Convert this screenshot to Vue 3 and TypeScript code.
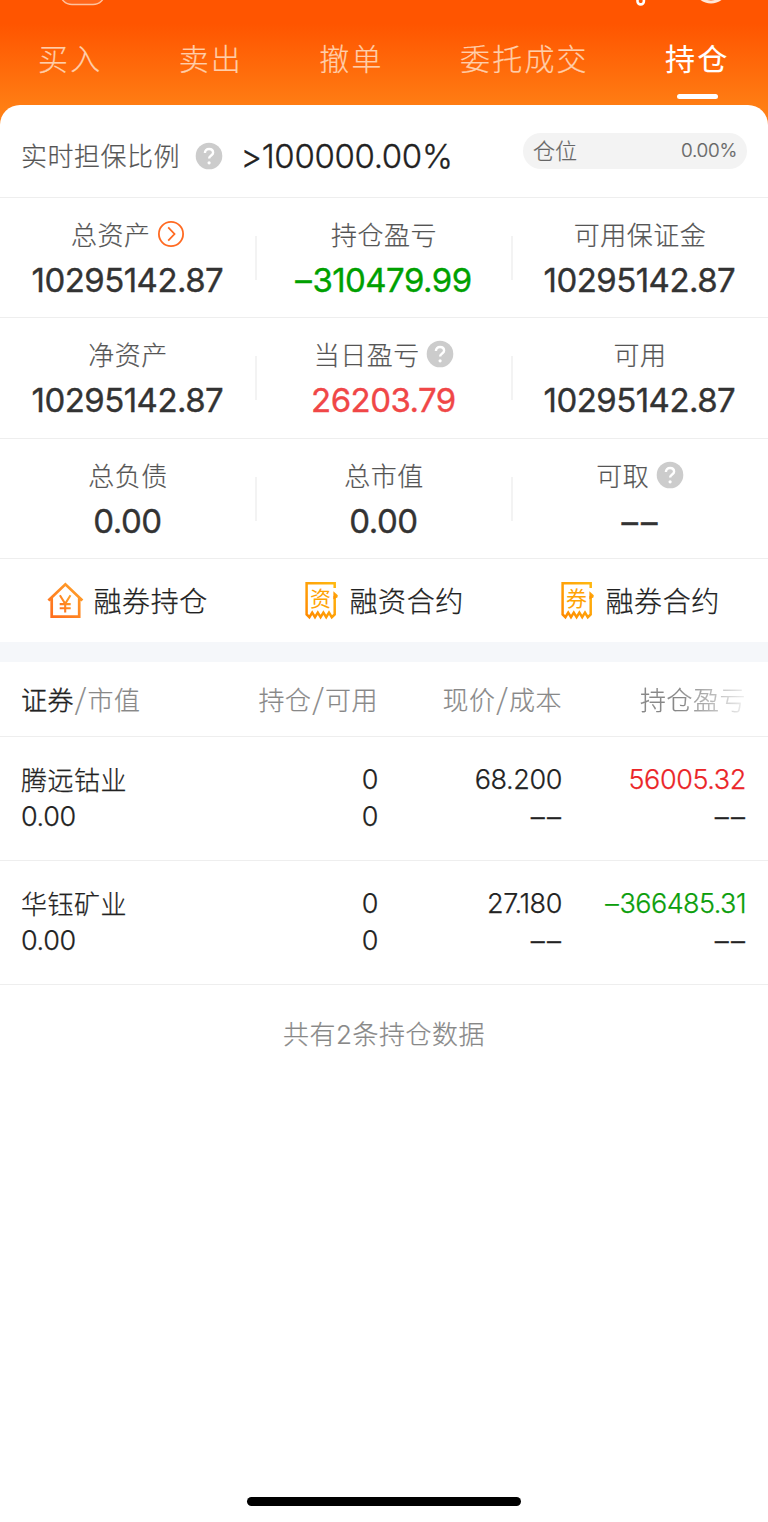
<script setup lang="ts">
interface Metric { label: string; value: string; sign?: string; tone?: string; mark?: 'help' | 'go' }
interface Holding { name: string; value: string; held: string; usable: string; price: string; cost: string; sign: string; profit: string; rate: string; tone: string }

const tabs: string[] = ['买入', '卖出', '撤单', '委托成交', '持仓']
const activeTab = '持仓'

const metricRows: Metric[][] = [
  [
    { label: '总资产', value: '10295142.87', mark: 'go' },
    { label: '持仓盈亏', sign: '–', value: '310479.99', tone: 'down' },
    { label: '可用保证金', value: '10295142.87' },
  ],
  [
    { label: '净资产', value: '10295142.87' },
    { label: '当日盈亏', value: '26203.79', tone: 'up', mark: 'help' },
    { label: '可用', value: '10295142.87' },
  ],
  [
    { label: '总负债', value: '0.00' },
    { label: '总市值', value: '0.00' },
    { label: '可取', value: '––', tone: 'dash', mark: 'help' },
  ],
]

const actions = [
  { label: '融券持仓', glyph: '' },
  { label: '融资合约', glyph: '资' },
  { label: '融券合约', glyph: '券' },
]

const columns: string[][] = [['证券', '市值'], ['持仓', '可用'], ['现价', '成本'], ['持仓盈亏']]

const holdings: Holding[] = [
  { name: '腾远钴业', value: '0.00', held: '0', usable: '0', price: '68.200', cost: '––', sign: '', profit: '56005.32', rate: '––', tone: 'up' },
  { name: '华钰矿业', value: '0.00', held: '0', usable: '0', price: '27.180', cost: '––', sign: '–', profit: '366485.31', rate: '––', tone: 'down' },
]
</script>

<template>
  <div class="screen">
    <header class="top">
      <svg class="edge" width="768" height="8" viewBox="0 0 768 8" fill="none">
        <rect x="60" y="-22" width="45" height="26.5" rx="12" stroke="#ffc29e" stroke-width="1.4" fill="#fff" fill-opacity=".1" />
        <path d="M637.5 -3V1.2a3.2 3.2 0 0 0 6.4 0V-3" stroke="#fff" stroke-width="2.6" />
        <circle cx="711" cy="-14" r="16" stroke="#ffe6d8" stroke-width="3" />
      </svg>
      <nav class="tabs">
        <span v-for="t in tabs" :key="t" class="tab" :class="{ active: t === activeTab }">{{ t }}</span>
      </nav>
    </header>

    <main class="sheet">
      <section class="ratio">
        <span class="ratio-label">实时担保比例</span>
        <svg class="help" width="28" height="28" viewBox="0 0 28 28"><circle cx="14" cy="14" r="13.3" fill="#ccc" /><path d="M9.9 11.1C9.9 8.4 11.6 7 14 7s4.1 1.4 4.1 3.7c0 2.8-4 2.9-4 5.9" fill="none" stroke="#fff" stroke-width="2.4" /><circle cx="14.1" cy="20.8" r="1.6" fill="#fff" /></svg>
        <span class="ratio-value">&gt;100000.00%</span>
        <span class="pill"><span class="pill-name">仓位</span><span class="pill-num">0.00%</span></span>
      </section>

      <section v-for="(row, i) in metricRows" :key="i" class="metrics">
        <div v-for="m in row" :key="m.label" class="metric">
          <div class="metric-label">
            <span>{{ m.label }}</span>
            <svg v-if="m.mark === 'help'" class="mark" width="28" height="28" viewBox="0 0 28 28"><circle cx="14" cy="14" r="13.3" fill="#ccc" /><path d="M9.9 11.1C9.9 8.4 11.6 7 14 7s4.1 1.4 4.1 3.7c0 2.8-4 2.9-4 5.9" fill="none" stroke="#fff" stroke-width="2.4" /><circle cx="14.1" cy="20.8" r="1.6" fill="#fff" /></svg>
            <svg v-if="m.mark === 'go'" class="mark" width="28" height="28" viewBox="0 0 28 28" fill="none" stroke="#ff6a22"><circle cx="14" cy="14" r="12.1" stroke-width="1.8" /><path d="M11.2 7.4l6.3 6.6-6.3 6.6" stroke-width="1.8" /></svg>
          </div>
          <div class="metric-value" :class="m.tone"><span v-if="m.sign" class="sign">{{ m.sign }}</span>{{ m.value }}</div>
        </div>
      </section>

      <section class="actions">
        <div v-for="a in actions" :key="a.label" class="action">
          <svg class="action-icon" width="40" height="40" viewBox="0 0 40 40" fill="none">
            <defs>
              <linearGradient id="warm" x1="0" y1="1" x2="1" y2="0"><stop stop-color="#ff6b1c" /><stop offset="1" stop-color="#ffa52b" /></linearGradient>
              <linearGradient id="gold" x1="0" y1="1" x2="1" y2="0"><stop stop-color="#ff8a00" /><stop offset="1" stop-color="#ffb810" /></linearGradient>
            </defs>
            <template v-if="!a.glyph">
              <path d="M3.4 20.5L20.4 4.3 37.4 20.5M6.7 17.8V36.6H34.2V17.8" stroke="url(#warm)" stroke-width="2.7" />
              <path d="M14.9 15.3l5.3 8.4 5.3-8.4M20.2 23.3v9.3M14.7 24.1h11M14.7 28.2h11" stroke="url(#warm)" stroke-width="2.1" />
            </template>
            <template v-else>
              <path d="M33.7 8V3.3H5.6V34.4l2.8 2.8 2.8-4.6 2.8 4.6 2.8-4.6 2.8 4.6 2.8-4.6 2.8 4.6 2.8-4.6 2.8 4.6 2.9-2.8V16" stroke="url(#gold)" stroke-width="2.5" />
              <path d="M32.4 11.2l4.4 4-.4 2.4-4 1.6z" fill="url(#gold)" />
              <text x="19.4" y="25.8" text-anchor="middle" class="stamp" fill="#ffa305">{{ a.glyph }}</text>
            </template>
          </svg>
          <span>{{ a.label }}</span>
        </div>
      </section>

      <div class="band"></div>

      <section class="table">
        <div class="head line">
          <span v-for="(c, i) in columns" :key="i"><span :class="{ sorted: i === 0 }">{{ c[0] }}</span><template v-if="c[1]"><span class="slash">/</span>{{ c[1] }}</template></span>
        </div>
        <div v-for="h in holdings" :key="h.name" class="line holding">
          <div class="cell"><span class="name">{{ h.name }}</span><span>{{ h.value }}</span></div>
          <div class="cell"><span>{{ h.held }}</span><span>{{ h.usable }}</span></div>
          <div class="cell"><span>{{ h.price }}</span><span class="dashes">{{ h.cost }}</span></div>
          <div class="cell"><span :class="h.tone"><span v-if="h.sign" class="sign">{{ h.sign }}</span>{{ h.profit }}</span><span class="dashes">{{ h.rate }}</span></div>
        </div>
      </section>
      <p class="summary">共有2条持仓数据</p>
      <div class="home-bar"></div>
    </main>
  </div>
</template>

<style>
body { margin: 0; background: #fff; }
</style>

<style scoped>
.screen { width: 768px; height: 1522px; overflow: hidden; box-sizing: border-box; background: linear-gradient(#ff5500 0, #ff5500 24px, #ff7e14 108px, #ff8218 130px); font-family: Inter, "Noto Sans CJK SC", sans-serif; color: #333; font-weight: 400; font-feature-settings: "calt" 0; }
.top { position: relative; height: 104.5px; }
.edge { position: absolute; left: 0; top: 0; display: block; }
.tabs { display: flex; justify-content: space-between; padding: 34px 40.5px 0 38px; }
.tab { position: relative; font: 300 30px/46px "Noto Sans CJK SC", sans-serif; letter-spacing: 2.2px; color: #ffceaa; height: 64px; margin-right: -2px; -webkit-text-stroke: .2px currentColor; }
.tab.active { color: #fff; font-weight: 400; -webkit-text-stroke: .1px currentColor; }
.tab.active::after { content: ""; position: absolute; left: 12px; top: 60px; width: 41px; height: 5px; border-radius: 3px; background: #fff; }
.sheet { height: 1417.5px; background: #fff; border-radius: 20px 20px 0 0; display: flex; flex-direction: column; }
.ratio { height: 92.3px; border-bottom: 1px solid #eee; display: flex; align-items: center; padding: 0 21px; flex: none; }
.ratio-label { font: 300 26px/40px "Noto Sans CJK SC", sans-serif; color: #555; letter-spacing: .5px; margin-top: 9px; -webkit-text-stroke: .2px currentColor; }
.help { margin: 10px 0 0 14.5px; }
.ratio-value { margin: 10px 0 0 18px; font-size: 33px; line-height: 40px; font-weight: 300; letter-spacing: -.35px; color: #222; -webkit-text-stroke: .3px currentColor; }
.pill { margin-left: auto; width: 224px; height: 36.5px; margin-top: 1px; border-radius: 19px; background: #f3f3f3; display: flex; align-items: center; justify-content: space-between; padding: 0 10px; box-sizing: border-box; color: #666; font-weight: 300; -webkit-text-stroke: .2px currentColor; }
.pill-name { font: 300 22px/34px "Noto Sans CJK SC", sans-serif; margin-top: -4px; }
.pill-num { font-size: 19px; line-height: 34px; letter-spacing: -.3px; }
.metrics { height: 119.5px; flex: none; display: grid; grid-template-columns: repeat(3, 1fr); border-bottom: 1px solid #eee; }
.metric { position: relative; text-align: center; padding-top: 15.8px; }
.metric + .metric::before { content: ""; position: absolute; left: -1px; top: 38px; width: 1.5px; height: 44px; background: #f3f3f3; }
.metric-label { display: flex; justify-content: center; align-items: center; height: 40px; font: 300 26px/40px "Noto Sans CJK SC", sans-serif; letter-spacing: .5px; color: #555; -webkit-text-stroke: .2px currentColor; }
.mark { margin-left: 6.5px; }
.metric-value { font-size: 33px; font-weight: 400; line-height: 52px; letter-spacing: -.55px; margin-left: -1.2px; -webkit-text-stroke: .35px currentColor; }
.metric-value.dash { letter-spacing: 3px; margin-right: -3px; padding-top: 1px; }
.up { color: #f04747; }
.down { color: #00a000; }
.actions { height: 82.3px; flex: none; display: grid; grid-template-columns: repeat(3, 1fr); }
.action { display: flex; align-items: center; padding-left: 45px; gap: 8.5px; font: 300 28px/42px "Noto Sans CJK SC", sans-serif; letter-spacing: .6px; color: #222; -webkit-text-stroke: .25px currentColor; }
.action-icon { -webkit-text-stroke: 0; }
.stamp { font: 400 21px "Noto Sans CJK SC", sans-serif; letter-spacing: 0; }
.band { height: 20px; flex: none; background: #f5f7fa; }
.line { display: grid; grid-template-columns: 190px 167px 184px 184px; padding: 0 21px; border-bottom: 1px solid #eee; }
.line > * { text-align: right; }
.line > *:first-child { text-align: left; }
.head { height: 74px; font: 300 26px/73px "Noto Sans CJK SC", sans-serif; color: #888; letter-spacing: .5px; -webkit-text-stroke: .2px currentColor; }
.sorted { color: #222; -webkit-text-stroke: .4px currentColor; }
.head > span:not(:first-child) .sorted { color: inherit; }
.slash { font-size: 29px; line-height: 1; margin: 0 .8px; }
.head > span:last-child { -webkit-mask-image: linear-gradient(90deg, #000 65%, transparent 105%); mask-image: linear-gradient(90deg, #000 65%, transparent 105%); }
.holding { height: 123px; }
.cell { display: flex; flex-direction: column; padding-top: 24px; font-size: 27px; font-weight: 300; line-height: 37px; letter-spacing: -.4px; color: #222; -webkit-text-stroke: .25px currentColor; }
.name { font: 300 26px/36px "Noto Sans CJK SC", sans-serif; letter-spacing: .5px; margin-bottom: 1px; }
.dashes { font-size: 28px; padding-top: 1px; letter-spacing: 2.2px; margin-right: -1.2px; }
.sign { margin-right: 1.2px; }
.cell .up { color: #eb2528; }
.cell .down { color: #0c9e0c; letter-spacing: -.55px; }
.summary { margin: 30px 0 0; text-align: center; font: 300 26px/40px Inter, "Noto Sans CJK SC", sans-serif; letter-spacing: .5px; color: #888; -webkit-text-stroke: .2px currentColor; }
.home-bar { width: 274px; height: 9px; border-radius: 5px; background: #000; margin: auto auto 16px; }
</style>
